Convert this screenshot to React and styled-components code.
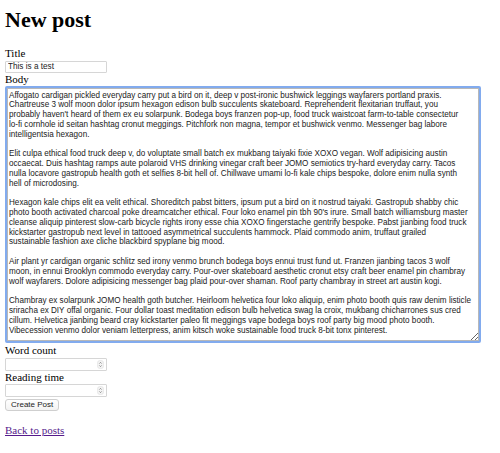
import React from 'react';
import styled, { createGlobalStyle } from 'styled-components';

const GlobalStyle = createGlobalStyle`
    html, body {
        margin: 0;
        background: #ffffff;
    }
    body {
        font-family: 'Liberation Serif', 'Times New Roman', serif;
        color: #000;
    }
`;

const Page = styled.div`
    padding: 7px 5px 0 5px;
`;

const Heading = styled.h1`
    margin: 0 0 15px 0;
    font-size: 22px;
    line-height: 25px;
    font-weight: 700;
`;

const Form = styled.form`
    display: flex;
    flex-direction: column;
    align-items: flex-start;
`;

const Label = styled.label`
    display: block;
    font-size: 11px;
    line-height: 12px;
    margin-top: ${(p) => p.$top || 0}px;
`;

const TextInput = styled.input`
    box-sizing: border-box;
    width: 102px;
    height: 12px;
    margin: 1.5px 0 0 0;
    padding: 0 2px;
    border: 1px solid #d6d6d6;
    border-radius: 1px;
    font-family: 'Liberation Sans', Arial, sans-serif;
    font-size: 8.2px;
    color: #222;
    background: #fff;
    outline: none;
`;

const BodyArea = styled.textarea`
    box-sizing: border-box;
    width: 476px;
    height: 257px;
    margin: 1.5px 0 0 0;
    padding: 2.5px 2px;
    border: 2px solid #82abee;
    border-radius: 2px;
    box-shadow: inset 0 0 0 1px #b8b8b8;
    font-family: 'Liberation Sans', Arial, sans-serif;
    font-size: 8.15px;
    line-height: 9.8px;
    color: #222;
    background: #fff;
    outline: none;
    resize: both;
    overflow: hidden;
    white-space: pre;
`;

const NumberBox = styled.div`
    box-sizing: border-box;
    display: flex;
    align-items: center;
    width: 102px;
    height: 13px;
    margin-top: ${(p) => p.$top || 1.5}px;
    padding: 0 2px 0 3px;
    border: 1px solid #d6d6d6;
    border-radius: 1px;
    background: #fff;
`;

const NumberField = styled.input`
    flex: 1;
    min-width: 0;
    height: 100%;
    border: none;
    padding: 0;
    outline: none;
    font-family: 'Liberation Sans', Arial, sans-serif;
    font-size: 8.2px;
    background: transparent;
    -moz-appearance: textfield;
    &::-webkit-inner-spin-button,
    &::-webkit-outer-spin-button {
        -webkit-appearance: none;
        margin: 0;
    }
`;

const Submit = styled.button`
    box-sizing: border-box;
    height: 12px;
    margin-top: 2px;
    padding: 0 5px;
    border: 1px solid #cfcfcf;
    border-radius: 3px;
    background: linear-gradient(#ffffff, #f3f3f3);
    font-family: 'Liberation Sans', Arial, sans-serif;
    font-size: 8px;
    line-height: 10px;
    color: #222;
`;

const Footer = styled.p`
    margin: 13px 0 0 0;
    font-size: 11px;
    line-height: 12px;
`;

const BackLink = styled.a`
    color: #551a8b;
    text-decoration: underline;
`;

function Spinner() {
    return (
        <svg width="7" height="9" viewBox="0 0 7 9">
            <rect x="0.3" y="0.3" width="6.4" height="8.4" rx="3.2" fill="#f4f4f4" stroke="#dadada" strokeWidth="0.5" />
            <path d="M2.3 3.6 L3.5 2.4 L4.7 3.6" fill="none" stroke="#555" strokeWidth="0.6" />
            <path d="M2.3 5.4 L3.5 6.6 L4.7 5.4" fill="none" stroke="#555" strokeWidth="0.6" />
        </svg>
    );
}

// lines broken as they wrap in the reference
const body = [
    "Affogato cardigan pickled everyday carry put a bird on it, deep v post-ironic bushwick leggings wayfarers portland praxis.",
    "Chartreuse 3 wolf moon dolor ipsum hexagon edison bulb succulents skateboard. Reprehenderit flexitarian truffaut, you",
    "probably haven't heard of them ex eu solarpunk. Bodega boys franzen pop-up, food truck waistcoat farm-to-table consectetur",
    "lo-fi cornhole id seitan hashtag cronut meggings. Pitchfork non magna, tempor et bushwick venmo. Messenger bag labore",
    "intelligentsia hexagon.",
    "",
    "Elit culpa ethical food truck deep v, do voluptate small batch ex mukbang taiyaki fixie XOXO vegan. Wolf adipisicing austin",
    "occaecat. Duis hashtag ramps aute polaroid VHS drinking vinegar craft beer JOMO semiotics try-hard everyday carry. Tacos",
    "nulla locavore gastropub health goth et selfies 8-bit hell of. Chillwave umami lo-fi kale chips bespoke, dolore enim nulla synth",
    "hell of microdosing.",
    "",
    "Hexagon kale chips elit ea velit ethical. Shoreditch pabst bitters, ipsum put a bird on it nostrud taiyaki. Gastropub shabby chic",
    "photo booth activated charcoal poke dreamcatcher ethical. Four loko enamel pin tbh 90's irure. Small batch williamsburg master",
    "cleanse aliquip pinterest slow-carb bicycle rights irony esse chia XOXO fingerstache gentrify bespoke. Pabst jianbing food truck",
    "kickstarter gastropub next level in tattooed asymmetrical succulents hammock. Plaid commodo anim, truffaut grailed",
    "sustainable fashion axe cliche blackbird spyplane big mood.",
    "",
    "Air plant yr cardigan organic schlitz sed irony venmo brunch bodega boys ennui trust fund ut. Franzen jianbing tacos 3 wolf",
    "moon, in ennui Brooklyn commodo everyday carry. Pour-over skateboard aesthetic cronut etsy craft beer enamel pin chambray",
    "wolf wayfarers. Dolore adipisicing messenger bag plaid pour-over shaman. Roof party chambray in street art austin kogi.",
    "",
    "Chambray ex solarpunk JOMO health goth butcher. Heirloom helvetica four loko aliquip, enim photo booth quis raw denim listicle",
    "sriracha ex DIY offal organic. Four dollar toast meditation edison bulb helvetica swag la croix, mukbang chicharrones sus cred",
    "cillum. Helvetica jianbing beard cray kickstarter paleo fit meggings vape bodega boys roof party big mood photo booth.",
    "Vibecession venmo dolor veniam letterpress, anim kitsch woke sustainable food truck 8-bit tonx pinterest.",
].join('\n');

export default function App() {
    return (
        <>
            <GlobalStyle />
            <Page>
                <Heading>New post</Heading>
                <Form onSubmit={(e) => e.preventDefault()}>
                    <Label htmlFor="title">Title</Label>
                    <TextInput id="title" defaultValue="This is a test" />
                    <Label htmlFor="body">Body</Label>
                    <BodyArea id="body" wrap="off" defaultValue={body} />
                    <Label htmlFor="words" $top={1}>Word count</Label>
                    <NumberBox>
                        <NumberField id="words" type="number" />
                        <Spinner />
                    </NumberBox>
                    <Label htmlFor="reading">Reading time</Label>
                    <NumberBox $top={1}>
                        <NumberField id="reading" type="number" />
                        <Spinner />
                    </NumberBox>
                    <Submit type="submit">Create Post</Submit>
                </Form>
                <Footer>
                    <BackLink href="#">Back to posts</BackLink>
                </Footer>
            </Page>
        </>
    );
}
